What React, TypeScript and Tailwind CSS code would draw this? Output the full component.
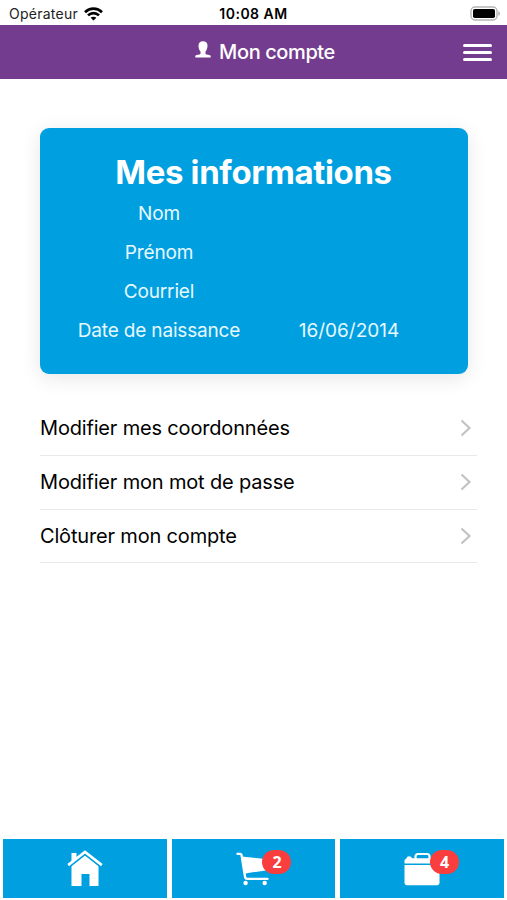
import React from 'react';

interface InfoRow {
  label: string;
  value: string;
}

const INFOS: InfoRow[] = [
  { label: 'Nom', value: '' },
  { label: 'Prénom', value: '' },
  { label: 'Courriel', value: '' },
  { label: 'Date de naissance', value: '16/06/2014' },
];

const ACTIONS = ['Modifier mes coordonnées', 'Modifier mon mot de passe', 'Clôturer mon compte'];

const WifiIcon = () => (
  <svg width="19" height="14" viewBox="0 0 19 14" fill="none" stroke="#000" strokeWidth="2.7">
    <path d="M1 5.2C5.8.5 13.2.5 18 5.2" />
    <path d="M4 8.4c3.1-3 7.9-3 11 0" />
    <path d="M9.5 13.6 6.6 10.8c1.6-1.5 4.2-1.5 5.8 0z" fill="#000" stroke="none" />
  </svg>
);

const BatteryIcon = () => (
  <svg width="31" height="15" viewBox="0 0 31 15">
    <rect x="1" y="1" width="26" height="13" rx="4" fill="#fff" stroke="#b5b5b5" strokeWidth="1.4" />
    <rect x="3" y="3" width="22" height="9" rx="1.8" fill="#000" />
    <path d="M28.4 5.2c2 .8 2 3.8 0 4.6z" fill="#aaa" />
  </svg>
);

const UserIcon = () => (
  <svg width="16" height="17" viewBox="0 0 16 17" fill="#fff">
    <path d="M8 .2c3 0 4.500 1.700 4.500 4.500 0 2.400-.8 4.500-2 5.700v2c0 .7.500 1 1.200 1.100l2.600.4c.9.2 1.400.6 1.400 1.400v1.200H.3v-1.200c0-.8.5-1.200 1.400-1.400l2.600-.4c.7-.1 1.200-.4 1.200-1.100v-2c-1.200-1.200-2-3.300-2-5.700C3.500 1.900 5 .2 8 .2z" />
  </svg>
);

const HomeIcon = () => (
  <svg width="36" height="37" viewBox="0 0 36 37">
    <path d="M4.500 3h5v6l-5 5z" fill="#fff" />
    <path d="M1.200 15.200 18 2l16.800 13.200" fill="none" stroke="#fff" strokeWidth="2.800" />
    <path d="M4.500 15.800 18 5.200l13.500 10.600V36h-9V24h-8v12h-10z" fill="#fff" />
    <path d="M2.500 17 18 4.800 33.500 17" fill="none" stroke="#00a0e0" strokeWidth="1.200" />
  </svg>
);

const CartIcon = () => (
  <svg width="34" height="34" viewBox="0 0 34 34">
    <path d="M1.400 1.800h2.800c.7 0 1.100.4 1.300 1.100L9 24.800c.2 1.300 1 2 2.300 2h20.300" fill="none" stroke="#fff" strokeWidth="2.300" strokeLinecap="round" />
    <path d="M5.500 4.500 33 7.500v10.500l-22.500 3.200-2 1.800z" fill="#fff" />
    <circle cx="9.600" cy="31" r="2.200" fill="#fff" />
    <circle cx="28.700" cy="31" r="2.200" fill="#fff" />
  </svg>
);

const BagIcon = () => (
  <svg width="36" height="34" viewBox="0 0 36 34" fill="#fff">
    <path d="M11.500 7V4.500c0-1.500 1-2.500 2.500-2.500h9c1.500 0 2.500 1 2.500 2.500V7" fill="none" stroke="#fff" strokeWidth="2.200" />
    <path d="M.5 11.500V8.700c0-1 .8-1.700 1.700-2 .5-1.700 1.600-2.500 3-2.500s2.300.8 2.800 2h25.500c1.200 0 2 .8 2 2v3.300z" />
    <path d="M.5 13h35v17.800c0 1.400-1 2.400-2.400 2.400H2.900C1.500 33.200.5 32.200.5 30.800z" />
  </svg>
);

const ChevronIcon = () => (
  <svg width="12" height="18" viewBox="0 0 12 18" fill="none" stroke="#c2c2c4" strokeWidth="2.200">
    <path d="M1.500 1.500 9.500 9l-8 7.500" />
  </svg>
);

const Badge = ({ count }: { count: number }) => (
  <span className="absolute left-[26px] -top-[2px] flex h-[24px] w-[29px] items-center justify-center rounded-full bg-[#fa3e3e] font-['Noto_Sans',sans-serif] text-[16px] font-bold leading-none text-white">
    {count}
  </span>
);

export default function App() {
  return (
    <div className="flex h-[900px] w-[507px] flex-col overflow-hidden bg-white font-['Inter',sans-serif] text-black">
      {/* Status bar */}
      <div className="grid h-[25px] shrink-0 grid-cols-3 items-center pl-[9px] pr-[6px] pt-[2px]">
        <div className="flex items-center gap-[6px]">
          <span className="text-[14px] tracking-[0.25px] text-[#222]">Opérateur</span>
          <WifiIcon />
        </div>
        <span className="pr-[3px] text-center text-[14px] font-semibold tracking-[0.5px]">10:08 AM</span>
        <div className="flex justify-end">
          <BatteryIcon />
        </div>
      </div>

      {/* Header */}
      <header className="grid h-[54px] shrink-0 grid-cols-[44px_1fr_44px] items-center bg-[#743c8f]">
        <span />
        <h1 className="flex items-center justify-center gap-[8px] pl-[23px] text-white">
          <span className="pb-[6px]">
            <UserIcon />
          </span>
          <span className="whitespace-nowrap text-[20px] font-medium tracking-[-0.4px]">Mon compte</span>
        </h1>
        <button className="flex w-[29px] flex-col gap-[4px] pt-px" aria-label="Menu">
          <span className="h-[3px] rounded-full bg-white" />
          <span className="h-[3px] rounded-full bg-white" />
          <span className="h-[3px] rounded-full bg-white" />
        </button>
      </header>

      <main className="flex grow flex-col pl-[40px] pr-[30px] pt-[49px]">
        <section className="h-[246px] w-[428px] rounded-[9px] bg-[#00a0e0] px-[24px] pt-[24px] text-center text-white shadow-[0_4px_20px_rgba(0,0,0,0.1)]">
          <h2 className="mb-[2px] pr-px text-[33px] font-bold leading-[41px] tracking-[-0.35px]">Mes informations</h2>
          {INFOS.map((info) => (
            <div key={info.label} className="grid h-[39px] grid-cols-2 items-center text-[19px] tracking-[-0.17px] text-[#e8f8ff]">
              <span className="whitespace-nowrap">{info.label}</span>
              <span className="tracking-normal">{info.value}</span>
            </div>
          ))}
        </section>

        <ul className="mt-[28px]">
          {ACTIONS.map((action) => (
            <li key={action} className="flex h-[53.8px] items-center justify-between border-b border-[#e9e9e9] pr-[5px]">
              <span className="text-[20px] tracking-[-0.17px]">{action}</span>
              <ChevronIcon />
            </li>
          ))}
        </ul>
      </main>

      {/* Bottom tabs */}
      <nav className="grid h-[61px] shrink-0 grid-cols-3 gap-[5px] px-[3px] pb-[2px]">
        <button className="flex items-center justify-center bg-[#00a0e0]">
          <HomeIcon />
        </button>
        <button className="flex items-center justify-center bg-[#00a0e0]">
          <span className="relative">
            <CartIcon />
            <Badge count={2} />
          </span>
        </button>
        <button className="flex items-center justify-center bg-[#00a0e0]">
          <span className="relative">
            <BagIcon />
            <Badge count={4} />
          </span>
        </button>
      </nav>
    </div>
  );
}
